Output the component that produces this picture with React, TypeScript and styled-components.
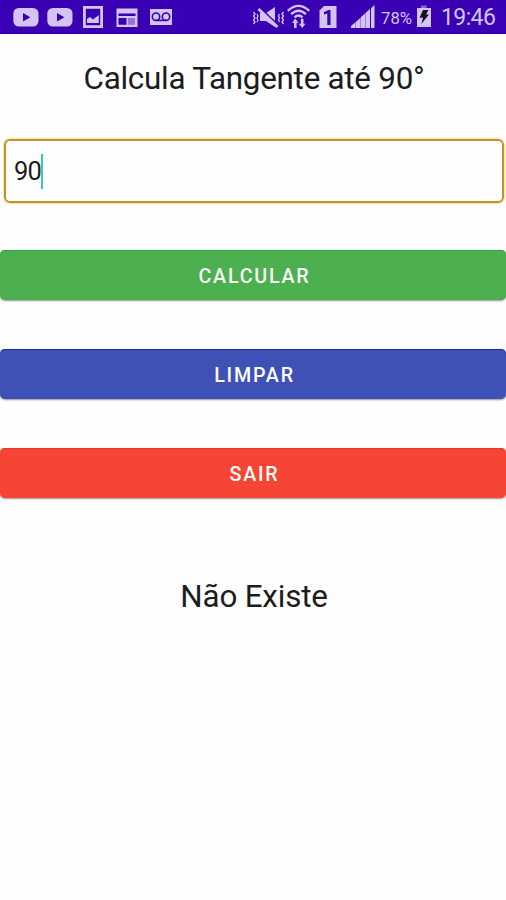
import React from 'react';
import styled, { createGlobalStyle } from 'styled-components';

const GlobalStyle = createGlobalStyle`
  * { box-sizing: border-box; }
  body { margin: 0; background: #fefefe; font-family: Roboto, sans-serif; color: #1c1c1c; }
`;

const Screen = styled.main`
  width: 506px;
  height: 900px;
  display: flex;
  flex-direction: column;
  overflow: hidden;
`;

const StatusBar = styled.header`
  height: 34px;
  flex: none;
  display: flex;
  align-items: flex-start;
  background: #3a00b3;
  border-bottom: 1px solid #2606a4;
  color: #d3c4f4;
`;

const Icon = styled.svg<{ $gap: number }>`
  display: block;
  flex: none;
  margin-left: ${(p) => p.$gap}px;
`;

const BarText = styled.span<{ $gap: number; $size: number; $width: number; $top: number; $track?: number }>`
  flex: none;
  width: ${(p) => p.$width}px;
  margin: ${(p) => p.$top}px 0 0 ${(p) => p.$gap}px;
  font-size: ${(p) => p.$size}px;
  line-height: 24px;
  letter-spacing: ${(p) => p.$track ?? 0}px;
  white-space: nowrap;
`;

const Title = styled.h1`
  margin: 23px 0 0;
  padding: 0 0 1px 2px;
  font-size: 31.4px;
  font-weight: 400;
  line-height: 43px;
  letter-spacing: -0.26px;
  text-align: center;
`;

const Field = styled.div`
  height: 64px;
  flex: none;
  margin: 38px 2px 0 4px;
  padding-left: 8px;
  display: flex;
  align-items: center;
  border: 2px solid #c4912f;
  border-radius: 6px;
  box-shadow: 0 0 1px 1px #fbe0a2;
  font-size: 25.5px;
  letter-spacing: -0.8px;
`;

const Caret = styled.span`
  width: 2px;
  height: 35px;
  background: #35cbbd;
`;

const Actions = styled.section`
  margin-top: 47px;
  display: flex;
  flex-direction: column;
  gap: 49px;
`;

const Button = styled.button<{ $color: string; $edge: string }>`
  height: 50px;
  padding: 3px 0 0 3px;
  border: 0;
  border-radius: 5px;
  background: ${(p) => p.$color};
  box-shadow: inset 0 1px 0 ${(p) => p.$edge}, 0 1px 2px rgba(0, 0, 0, 0.42);
  color: #f8fbf8;
  font: 500 19.7px/24px Roboto, sans-serif;
  letter-spacing: 1.77px;
`;

const Result = styled.p`
  margin: 77px 0 0;
  padding-left: 2px;
  font-size: 31.4px;
  line-height: 44px;
  letter-spacing: -0.2px;
  text-align: center;
`;

const BG = '#3a00b3';

const PlayIcon = ({ gap }: { gap: number }) => (
  <Icon $gap={gap} width="26" height="34" viewBox="0 0 26 34">
    <rect x="0.3" y="8" width="25.2" height="18.6" rx="5.5" fill="currentColor" />
    <path d="M10 13l7.4 4.3L10 21.6z" fill={BG} />
  </Icon>
);

const PictureIcon = () => (
  <Icon $gap={10} width="20" height="34" viewBox="0 0 20 34">
    <path fillRule="evenodd" d="M0 6h20v22H0zM2.8 8.8v16.4h14.4V8.8z" fill="currentColor" />
    <path d="M4 23v-4l3-2 3 2.4 5.8-4.4v8z" fill="currentColor" />
  </Icon>
);

const NewsIcon = () => (
  <Icon $gap={13} width="22" height="34" viewBox="0 0 22 34">
    <rect x="0.5" y="8.5" width="21" height="18.5" fill="currentColor" />
    <path d="M2.5 13.5h17V16h-17zM2.5 18h8v6.8h-8z" fill={BG} />
    <path d="M12 18h7v6.8h-7z" fill="#9376d3" />
  </Icon>
);

const VoicemailIcon = () => (
  <Icon $gap={12} width="22" height="34" viewBox="0 0 22 34">
    <rect y="9" width="22" height="16" fill="currentColor" />
    <g fill="none" stroke={BG} strokeWidth="1.6">
      <circle cx="6" cy="16.7" r="3.7" />
      <circle cx="16" cy="16.7" r="3.7" />
      <path d="M6 20.4h10" />
    </g>
  </Icon>
);

const MuteIcon = () => (
  <Icon $gap={80} width="34" height="34" viewBox="0 0 34 34">
    <path d="M8 13h6l9-6v20l-9-6H8z" fill="currentColor" />
    <path d="M8.5 8.5l19 18" stroke={BG} strokeWidth="2" />
    <path d="M6.5 9l19 18" stroke="currentColor" strokeWidth="2.8" />
    <path
      d="M1.5 12l1.5 2-1.5 2 1.5 2-1.5 2 1.5 2-1.5 2M5 14l1 2-1 2 1 2-1 2M31.5 12l-1.5 2 1.5 2-1.5 2 1.5 2-1.5 2 1.5 2M27.5 14l-1 2 1 2-1 2 1 2"
      fill="none" stroke="currentColor" strokeWidth="1.3"
    />
  </Icon>
);

const WifiIcon = () => (
  <Icon $gap={1} width="25" height="34" viewBox="0 0 25 34">
    <path
      d="M0.8 10.8Q11.5 1 22.2 10.8M4.1 14.2Q11.5 7.2 18.9 14.2M7.5 17.4Q11.5 13.6 15.5 17.4"
      fill="none" stroke="currentColor" strokeWidth="2.3"
    />
    <path d="M5 22.7L8.3 18.5l3.2 4.2H9.6V28H7v-5.3zM11.8 23.8l3.4 4.2 3.2-4.2h-1.9v-5h-2.6v5z" fill="currentColor" />
  </Icon>
);

const SimIcon = () => (
  <Icon $gap={7} width="18" height="34" viewBox="0 0 18 34">
    <path d="M5 6h12.5v22H0.5V10.5z" fill="currentColor" />
    <path d="M5 14.6V12l4.5-2h2v15H8.3V13.6z" fill={BG} />
  </Icon>
);

const SignalIcon = () => (
  <Icon $gap={14} width="24" height="34" viewBox="0 0 24 34">
    <path d="M0 28v-2l4-3.4V28zM5 28v-6.3l4-3.5V28zM10 28V17l4-3.5V28zM15 28V12.5l4-3.4V28z" fill="currentColor" />
    <path d="M20 28V8.3L23.5 5v23z" fill="currentColor" />
    <path d="M4 28v-5.4l1-.8V28zM9 28V18.2l1-.9V28zM14 28V13.5l1-1V28z" fill="#9c82dc" />
  </Icon>
);

const BatteryIcon = () => (
  <Icon $gap={3} width="16" height="34" viewBox="0 0 16 34">
    <path d="M5 5.5h5.5v3H5z" fill="#8b6bcf" />
    <path d="M1 8h14v19H1z" fill="currentColor" />
    <path d="M7 10h5.5L10 14.6h3L5.3 24l1.8-6.2H3.6z" fill="#171020" />
  </Icon>
);

export default function App() {
  return (
    <>
      <GlobalStyle />
      <Screen>
        <StatusBar>
          <PlayIcon gap={13} />
          <PlayIcon gap={8} />
          <PictureIcon />
          <NewsIcon />
          <VoicemailIcon />
          <MuteIcon />
          <WifiIcon />
          <SimIcon />
          <SignalIcon />
          <BarText $gap={6} $size={16.7} $width={32} $top={7}>78%</BarText>
          <BatteryIcon />
          <BarText $gap={9} $size={23} $width={56} $top={6} $track={-0.6}>19:46</BarText>
        </StatusBar>
        <Title>Calcula Tangente até 90°</Title>
        <Field>90<Caret /></Field>
        <Actions>
          <Button $color="#4caf50" $edge="#35a139">CALCULAR</Button>
          <Button $color="#3f51b5" $edge="#15309d">LIMPAR</Button>
          <Button $color="#f64435" $edge="#e6392c">SAIR</Button>
        </Actions>
        <Result>Não Existe</Result>
      </Screen>
    </>
  );
}
